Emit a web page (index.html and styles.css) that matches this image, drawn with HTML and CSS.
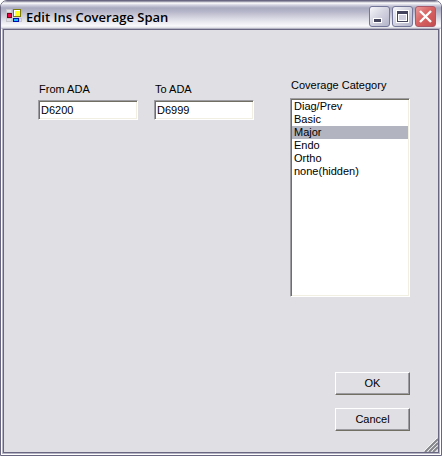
FILE: index.html
```
<!DOCTYPE html>
<html lang="en">
<head>
<meta charset="utf-8">
<title>Edit Ins Coverage Span</title>
<link rel="stylesheet" href="styles.css">
</head>
<body>
<div class="window">
  <header class="titlebar">
    <svg class="app-icon" width="16" height="16" viewBox="0 0 16 16" shape-rendering="crispEdges" aria-hidden="true">
      <path fill="#c6c5cc" d="M0 0h6v13H0zM6 9h10v4H6z"/>
      <path fill="#dedee6" d="M1 1h4v2H1zM1 10h4v2H1zM14 10h1v2h-1z"/>
      <path fill="#800010" d="M1 4h5v5H1z"/>
      <path fill="#f00048" d="M2 5h3v3H2z"/>
      <path fill="#7b7a08" d="M7 0h8v8H7z"/>
      <path fill="#fff" d="M8 1h6v6H8z"/>
      <path fill="#ffff20" d="M9 2h5v5H9z"/>
      <path fill="#0010b0" d="M7 9h6v4H7z"/>
      <path fill="#20b8ff" d="M8 10h4v2H8z"/>
    </svg>
    <h1 class="title">Edit Ins Coverage Span</h1>
    <div class="window-buttons">
      <button class="window-button" type="button" aria-label="Minimize">
        <svg width="19" height="19" viewBox="0 0 19 19" shape-rendering="crispEdges"><path fill="#fff" d="M3 11h9v5H3z"/><path fill="#44445c" d="M4 12h7v3H4z"/></svg>
      </button>
      <button class="window-button" type="button" aria-label="Maximize">
        <svg width="19" height="19" viewBox="0 0 19 19" shape-rendering="crispEdges"><path fill="#fff" d="M3 3h13v13H3z"/><path fill="#44445c" fill-rule="evenodd" d="M4 4h11v11H4zM5 7v7h9V7z"/><path fill="#d0d0de" d="M6 8h7v5H6z"/></svg>
      </button>
      <button class="window-button close" type="button" aria-label="Close">
        <svg width="19" height="19" viewBox="0 0 19 19"><path stroke="#fff" stroke-width="2.4" d="M4 4l11 11M15 4L4 15"/></svg>
      </button>
    </div>
  </header>
  <form class="client">
    <div class="fields">
      <div class="field">
        <label for="from">From ADA</label>
        <input id="from" type="text" value="D6200">
      </div>
      <div class="field">
        <label for="to">To ADA</label>
        <input id="to" type="text" value="D6999">
      </div>
      <div class="category">
        <label for="category">Coverage Category</label>
        <select id="category" size="15">
          <option>Diag/Prev</option>
          <option>Basic</option>
          <option selected>Major</option>
          <option>Endo</option>
          <option>Ortho</option>
          <option>none(hidden)</option>
        </select>
      </div>
    </div>
    <div class="actions">
      <button class="button" type="button">OK</button>
      <button class="button" type="button">Cancel</button>
    </div>
    <svg class="grip" width="14" height="14" viewBox="0 0 14 14" aria-hidden="true">
      <path stroke="#fff" d="M0 13L13 0M4 13L13 4M8 13L13 8"/>
      <path stroke="#85858c" stroke-width="2" d="M1 14L14 1M5 14L14 5M9 14L14 9"/>
    </svg>
  </form>
</div>
</body>
</html>
```
FILE: styles.css
```
* {
  box-sizing: border-box;
}

body {
  margin: 0;
  background: #fff;
  font: 11px/13px "Liberation Sans", Arial, sans-serif;
  color: #000;
}

.window {
  display: flex;
  flex-direction: column;
  min-height: 100vh;
  border: 1px solid #686681;
  border-radius: 7px 7px 0 0;
  background: #fff;
  overflow: hidden;
}

.titlebar {
  display: flex;
  align-items: center;
  height: 28px;
  padding: 3px 5px 0;
  background: linear-gradient(#77758f 0, #fff 2px, #d2d2e0 4px, #a9a9c0 7px, #b8b8cb 11px, #dcdce6 18px, #fafafc 25px, #c9c9d6 28px);
}

.app-icon {
  flex: none;
}

.title {
  flex: 1;
  margin: 0 0 0 4px;
  font: 600 13px/18px "Open Sans", sans-serif;
  white-space: nowrap;
}

.window-buttons {
  display: flex;
  gap: 2px;
}

.window-button {
  width: 21px;
  height: 21px;
  padding: 0;
  border: 1px solid #74769a;
  border-radius: 3px;
  background: linear-gradient(135deg, #f6f6fa, #d2d2e0 50%, #b4b4ca);
}

.window-button svg {
  display: block;
}

.window-button.close {
  border-color: #a85868;
  background: linear-gradient(135deg, #e89a9a, #d96464 45%, #c44c4e);
}

.client {
  position: relative;
  display: flex;
  flex: 1;
  flex-direction: column;
  justify-content: space-between;
  margin: 0 2px 2px;
  padding: 49px 28px 21px 34px;
  border: 1px solid #686681;
  outline: 1px solid #b4b4c5;
  background: #e0dfe3;
}

.fields {
  display: grid;
  grid-template-columns: 116fr 136fr 120fr;
  align-items: start;
}

.field {
  margin-right: 16px;
  padding-top: 4px;
}

.field + .field {
  margin-right: 36px;
}

label {
  display: block;
  padding-left: 1px;
  margin-bottom: 4px;
}

.category label {
  margin-bottom: 6px;
}

input,
select {
  display: block;
  width: 100%;
  margin: 0;
  border: 1px solid;
  border-color: #9d9da1 #fff #fff #9d9da1;
  border-radius: 0;
  outline: none;
  background: #fff;
  box-shadow: inset 1px 1px #716f64, inset -1px -1px #f1efe2;
  font: inherit;
  color: #000;
}

input {
  height: 20px;
  padding: 2px;
}

select {
  height: 199px;
  padding: 1px;
  overflow: hidden;
}

option {
  min-height: 13px;
  padding: 0 2px;
  line-height: 13px;
}

option:checked {
  background: #b2b4bf linear-gradient(#b2b4bf, #b2b4bf);
  color: #000;
}

.actions {
  display: flex;
  flex-direction: column;
  align-items: flex-end;
  gap: 13px;
}

.button {
  width: 75px;
  height: 23px;
  padding: 0;
  border: 1px solid;
  border-color: #fff #716f64 #716f64 #fff;
  border-radius: 0;
  background: #e0dfe3;
  box-shadow: inset -1px -1px #9d9da1;
  font: inherit;
  color: #000;
}

.grip {
  position: absolute;
  right: 0;
  bottom: 0;
}
```
